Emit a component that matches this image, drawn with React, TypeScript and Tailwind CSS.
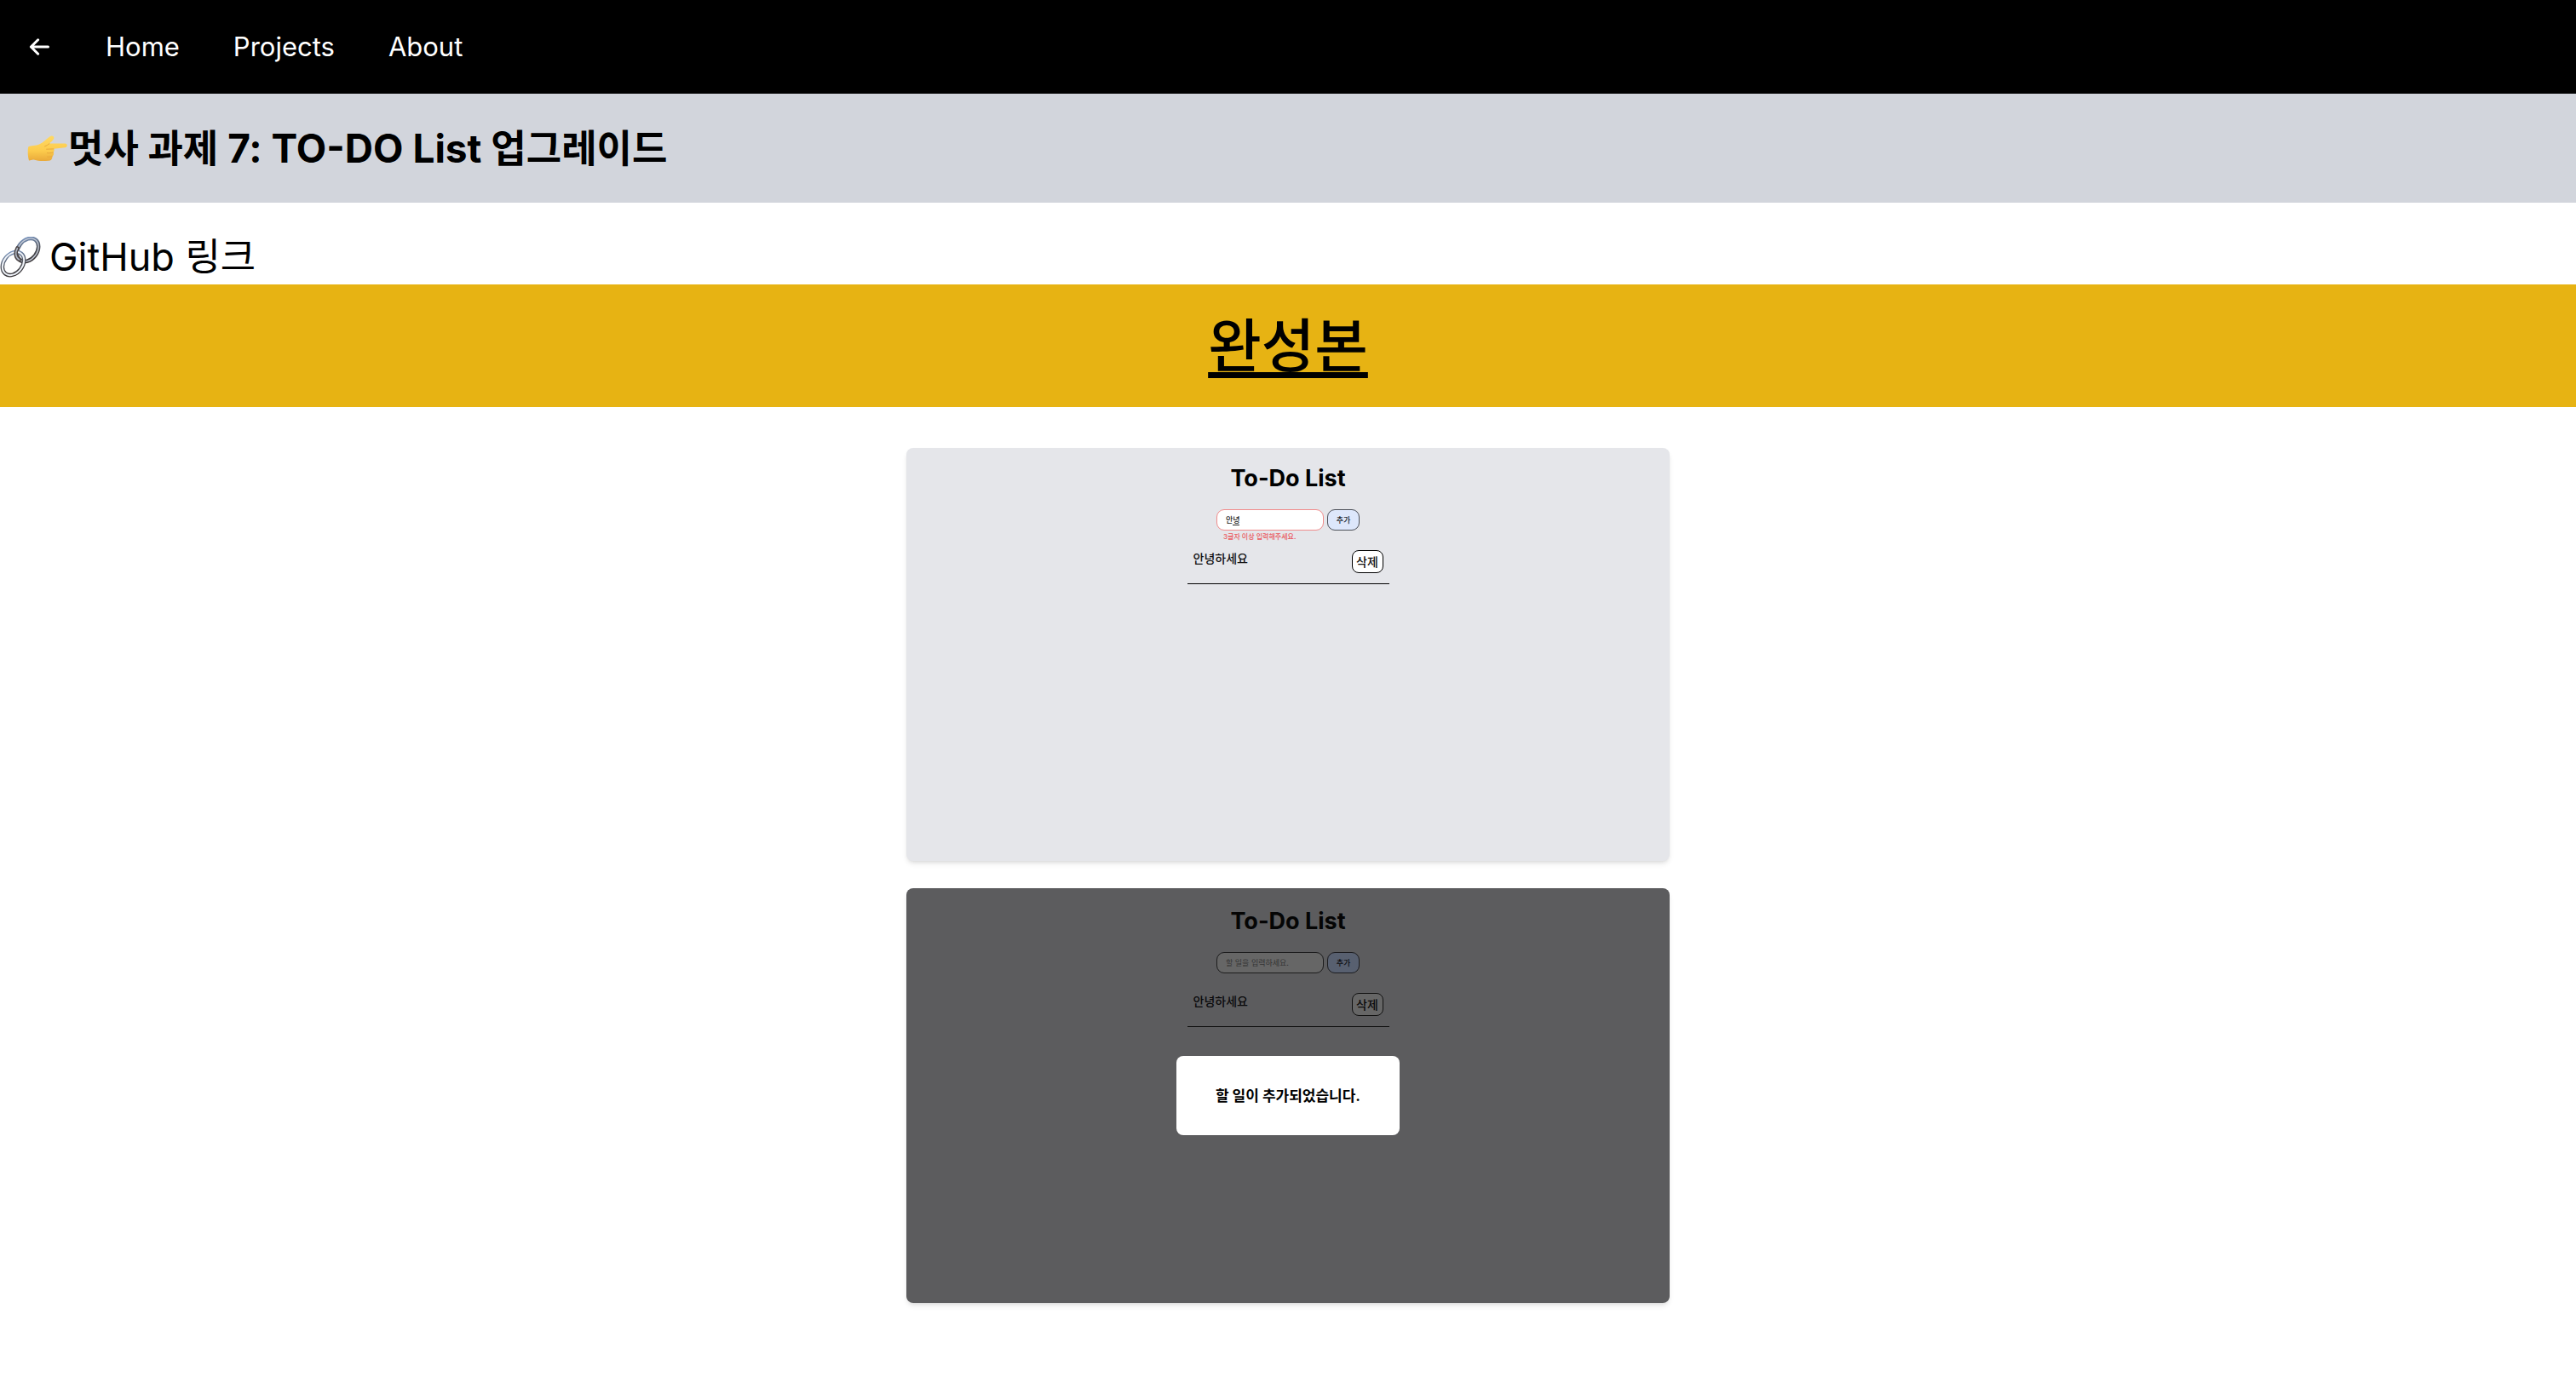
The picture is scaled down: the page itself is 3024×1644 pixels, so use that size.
import React from "react";

const sans = "font-['Inter','Noto_Sans_CJK_KR',sans-serif]";

function BackArrow() {
  return (
    <svg viewBox="0 0 24 20" className="h-5 w-6" fill="none" stroke="currentColor" strokeWidth="3" strokeLinecap="round" strokeLinejoin="round" aria-hidden="true">
      <path d="M22.5 10H2.4M10.6 1.8L2.4 10l8.2 8.2" />
    </svg>
  );
}

function PointingHand() {
  return (
    <svg viewBox="0 0 48 31" className="h-[31px] w-12 shrink-0" role="img" aria-label="👉">
      <defs>
        <linearGradient id="skin" x1="0" y1="0" x2="0" y2="1">
          <stop offset="0" stopColor="#ffd964" />
          <stop offset="0.6" stopColor="#fccb4c" />
          <stop offset="1" stopColor="#e9a93a" />
        </linearGradient>
      </defs>
      <path
        d="M1.4 13.2C4 11.6 10 12.4 14.5 10.2C19 8 22 4.5 26.6 1.2C30 -.8 32.6 2 30.8 4.6C29.4 6.7 27 8.5 26 9.6L44.4 9.4C47.6 9.6 47.6 14 44.4 14.3L31 15.8C32 17 31.8 18.8 30.6 19.8C31.6 21.4 31 23.6 29.4 24.4C29.6 27.6 28 29.6 25 29.7C18 30.4 12.4 30 8.6 28.8C6 27.8 4 29.6 2 29.4C.6 25 .2 17 1.4 13.2Z"
        fill="url(#skin)"
      />
      <path d="M31 15.9L22.6 16.2M30.4 20C28 20.8 25.6 20.9 23.4 20.7M29.2 24.7C27 25.3 25 25.3 23.6 25.1M26 9.7C24.4 11 22.6 12.2 20.6 12.9" fill="none" stroke="#e8a93c" strokeWidth="1" strokeLinecap="round" />
    </svg>
  );
}

function ChainLinks() {
  return (
    <svg viewBox="0 0 48 48" className="size-12 shrink-0" role="img" aria-label="🔗">
      <defs>
        <linearGradient id="steel" x1="0" y1="0" x2="1" y2="1">
          <stop offset="0" stopColor="#7f9fcf" />
          <stop offset="0.5" stopColor="#50535b" />
          <stop offset="1" stopColor="#332d2e" />
        </linearGradient>
      </defs>
      <g fill="none">
        <ellipse cx="32.5" cy="15.5" rx="11" ry="15" transform="rotate(38 32.5 15.5)" stroke="url(#steel)" strokeWidth="4.6" />
        <ellipse cx="32.5" cy="15.5" rx="11" ry="15" transform="rotate(38 32.5 15.5)" stroke="#c4cad6" strokeWidth="1.4" />
        <ellipse cx="15.5" cy="31.5" rx="11" ry="15" transform="rotate(38 15.5 31.5)" stroke="url(#steel)" strokeWidth="4.6" />
        <ellipse cx="15.5" cy="31.5" rx="11" ry="15" transform="rotate(38 15.5 31.5)" stroke="#eef2f8" strokeWidth="2" />
        <path d="M20.4 13.5C17.6 18.5 18 24.6 22.6 27" stroke="#4b4546" strokeWidth="4.6" strokeLinecap="round" />
        <path d="M20.4 13.5C17.6 18.5 18 24.6 22.6 27" stroke="#aeb6c4" strokeWidth="1.6" strokeLinecap="round" />
      </g>
    </svg>
  );
}

function TodoPreview({ invalid, dimmed }: { invalid?: boolean; dimmed?: boolean }) {
  const line = dimmed ? "border-[#111]" : "border-black";
  const ink = dimmed ? "text-[#0a0a0b]" : "text-[#111]";
  return (
    <div className={`flex flex-col items-center ${dimmed ? "pt-[19px]" : "pt-4"}`}>
      <h2 className={`text-[27px] leading-10 font-bold ${dimmed ? "text-[#050505]" : "text-black"}`}>To-Do List</h2>
      <form className="mt-4 flex gap-1" onSubmit={(e) => e.preventDefault()}>
        <div className="relative flex">
          <input
            type="text"
            aria-label="할 일"
            defaultValue={invalid ? "안녕" : ""}
            placeholder="할 일을 입력하세요."
            className={`h-[25px] w-[126px] rounded-[9px] border px-[10px] text-[9px] leading-4 ${invalid ? "border-[#f08c8c] bg-white font-medium text-[#222]" : "border-[#1c1c1d] bg-[#666] text-[#222] placeholder:text-[#333]"}`}
          />
          {invalid && <span aria-hidden="true" className="absolute top-[18px] left-[19px] h-px w-2 bg-[#222]" />}
        </div>
        <button
          type="submit"
          className={`h-[25px] w-[38px] rounded-[9px] border text-[9px] leading-4 font-medium ${dimmed ? "border-[#1c1c1f] bg-[#586070] text-[#0c0d10]" : "border-[#4c5059] bg-[#dde7fb] text-[#20242c]"}`}
        >
          추가
        </button>
      </form>
      <div className="flex h-[23px] w-[168px] px-2">
        {invalid && <p className="text-[8px] leading-[14px] font-medium text-[#ea5a5f]">3글자 이상 입력해주세요.</p>}
      </div>
      <ul className="w-[237px]">
        <li className={`flex h-10 items-start justify-between border-b pr-[7px] pl-[7px] font-medium ${line}`}>
          <span className={`text-[14px] leading-5 ${ink}`}>안녕하세요</span>
          <button type="button" className={`h-[27px] w-[37px] rounded-[8px] border text-[14px] leading-5 ${line} ${ink} ${dimmed ? "bg-[#666]" : "bg-white"}`}>
            삭제
          </button>
        </li>
      </ul>
    </div>
  );
}

export default function App() {
  return (
    <div className={`min-h-screen bg-white text-black ${sans}`}>
      <nav className="flex h-[110px] items-center bg-black pl-[34px] text-[31px] leading-[46px] text-white">
        <button type="button" aria-label="뒤로" className="mr-[66px]">
          <BackArrow />
        </button>
        <div className="flex gap-[63px]">
          <a href="#home">Home</a>
          <a href="#projects">Projects</a>
          <a href="#about">About</a>
        </div>
      </nav>

      <header className="bg-[#d2d5dc] px-8 py-8">
        <h1 className="flex h-16 items-center text-[46px] leading-[64px] font-bold">
          <PointingHand />
          <span className="whitespace-pre">
            <span className="text-[45px]">멋사 과제</span> 7: TO-DO List <span className="text-[45px]">업그레이드</span>
          </span>
        </h1>
      </header>

      <main>
        <h2 className="flex items-center gap-[10px] pt-8 text-[45px] leading-[64px]">
          <ChainLinks />
          <span>GitHub 링크</span>
        </h2>

        <div className="bg-[#e7b313] py-9 text-center text-[68px] leading-[72px]">
          <a href="#complete" className="font-medium underline decoration-[7px] underline-offset-[6px] [text-decoration-skip-ink:none]">
            완성본
          </a>
        </div>

        <section className="mx-auto mt-12 flex max-w-4xl flex-col gap-8 pb-12">
          <article className="min-h-[485px] rounded-lg bg-[#e5e6ea] shadow-md">
            <TodoPreview invalid />
          </article>
          <article className="relative min-h-[487px] rounded-lg bg-[#5c5c5e] shadow-md">
            <TodoPreview dimmed />
            <div role="dialog" aria-label="알림" className="absolute top-[197px] left-1/2 flex h-[93px] w-[262px] -translate-x-1/2 items-center justify-center rounded-lg bg-white">
              <p className="text-[17px] leading-6 font-bold">할 일이 추가되었습니다.</p>
            </div>
          </article>
        </section>
      </main>
    </div>
  );
}
